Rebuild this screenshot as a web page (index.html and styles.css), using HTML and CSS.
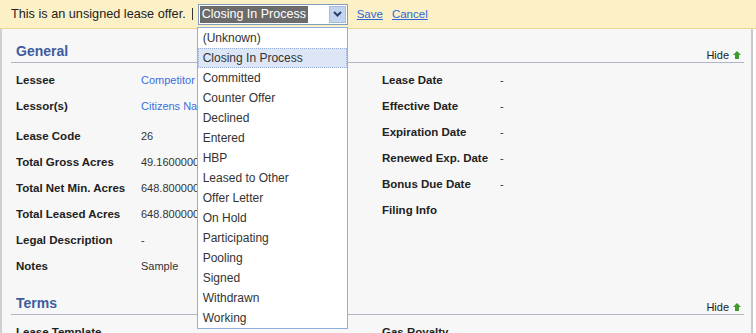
FILE: index.html
```html
<!DOCTYPE html>
<html lang="en">
<head>
  <meta charset="UTF-8" />
  <title>Lease Offer</title>
  <link rel="stylesheet" href="styles.css">
</head>
<body>
  <div class="notice">
    <span class="notice-text">This is an unsigned lease offer.</span>
    <span class="caret"></span>
    <div class="status-select">
      <div class="select-box">
        <span class="select-value">Closing In Process</span>
        <span class="select-btn">
          <svg width="9" height="6" viewBox="0 0 9 6"><path d="M1 1 L4.5 4.5 L8 1" fill="none" stroke="#2a3f6e" stroke-width="2"/></svg>
        </span>
      </div>
      <ul class="select-list">
        <li>(Unknown)</li>
        <li class="active">Closing In Process</li>
        <li>Committed</li>
        <li>Counter Offer</li>
        <li>Declined</li>
        <li>Entered</li>
        <li>HBP</li>
        <li>Leased to Other</li>
        <li>Offer Letter</li>
        <li>On Hold</li>
        <li>Participating</li>
        <li>Pooling</li>
        <li>Signed</li>
        <li>Withdrawn</li>
        <li>Working</li>
      </ul>
    </div>
    <a href="#" class="action">Save</a>
    <a href="#" class="action">Cancel</a>
  </div>

  <div class="page">
    <div class="section">
      <div class="section-head">
        <h2>General</h2>
        <a href="#" class="hide">Hide <span class="up"></span></a>
      </div>
      <div class="section-body">
        <div class="col">
          <div class="row"><span class="label">Lessee</span><a href="#" class="value link">Competitor Leasing Co.</a></div>
          <div class="row tall"><span class="label">Lessor(s)</span><a href="#" class="value link">Citizens National Bank</a></div>
          <div class="row"><span class="label">Lease Code</span><span class="value">26</span></div>
          <div class="row"><span class="label">Total Gross Acres</span><span class="value">49.16000000</span></div>
          <div class="row"><span class="label">Total Net Min. Acres</span><span class="value">648.80000000</span></div>
          <div class="row"><span class="label">Total Leased Acres</span><span class="value">648.80000000</span></div>
          <div class="row"><span class="label">Legal Description</span><span class="value">-</span></div>
          <div class="row"><span class="label">Notes</span><span class="value">Sample</span></div>
        </div>
        <div class="col right">
          <div class="row"><span class="label">Lease Date</span><span class="value">-</span></div>
          <div class="row"><span class="label">Effective Date</span><span class="value">-</span></div>
          <div class="row"><span class="label">Expiration Date</span><span class="value">-</span></div>
          <div class="row"><span class="label">Renewed Exp. Date</span><span class="value">-</span></div>
          <div class="row"><span class="label">Bonus Due Date</span><span class="value">-</span></div>
          <div class="row"><span class="label">Filing Info</span><span class="value"></span></div>
        </div>
      </div>
    </div>

    <div class="section">
      <div class="section-head">
        <h2>Terms</h2>
        <a href="#" class="hide">Hide <span class="up"></span></a>
      </div>
      <div class="section-body">
        <div class="col">
          <div class="row"><span class="label">Lease Template</span><span class="value"></span></div>
        </div>
        <div class="col right">
          <div class="row"><span class="label">Gas Royalty</span><span class="value"></span></div>
        </div>
      </div>
    </div>
  </div>
</body>
</html>
```

FILE: styles.css
```css
* {
  box-sizing: border-box;
}

body {
  margin: 0;
  background: #ffffff;
  font-family: "Liberation Sans", Arial, sans-serif;
  color: #222;
  overflow: hidden;
}

/* notice bar */
.notice {
  display: flex;
  align-items: center;
  height: 29px;
  padding: 0 11px;
  background: #fcf1c6;
  border-bottom: 1px solid #ead68e;
  font-size: 12.7px;
  position: relative;
  z-index: 2;
}

.notice-text {
  color: #222;
}

.caret {
  width: 1px;
  height: 12px;
  background: #333;
  margin: 0 5px 0 6px;
}

.status-select {
  position: relative;
  margin-right: 9px;
}

.select-box {
  display: flex;
  align-items: center;
  width: 150px;
  height: 21px;
  border: 1px solid #7f9db9;
  background: #fff;
  padding: 1px;
}

.select-value {
  background: #6b6b6b;
  color: #fff;
  padding: 0 2px 0 2px;
  line-height: 17px;
  font-size: 12.5px;
}

.select-btn {
  margin-left: auto;
  width: 17px;
  height: 17px;
  background: #c3d4ef;
  border: 1px solid #a7bcdf;
  display: flex;
  align-items: center;
  justify-content: center;
}

.select-list {
  position: absolute;
  left: -1px;
  top: 23px;
  width: 151px;
  margin: 0;
  padding: 0;
  list-style: none;
  background: #fff;
  border: 1px solid #8fb0e0;
  font-size: 12px;
  color: #333;
}

.select-list li {
  height: 20px;
  line-height: 20px;
  padding-left: 5px;
}

.select-list li.active {
  background: #dce6f6;
  outline: 1px dotted #9bb2d8;
  outline-offset: -1px;
}

.action {
  color: #2f63d6;
  font-size: 11.5px;
  margin-right: 9px;
}

/* page */
.page {
  background: #f7f7f7;
  border-left: 2px solid #cfcfcf;
  border-right: 2px solid #c9c9c9;
  margin-right: 3px;
  padding: 8px 7px 0 9px;
  height: 304px;
}

.section-head {
  display: flex;
  align-items: flex-end;
  justify-content: space-between;
  height: 26px;
  border-bottom: 1px solid #b3b3c6;
}

.section-head h2 {
  margin: 0;
  padding: 0 0 3px 5px;
  font-size: 14px;
  color: #3d5c9e;
}

.hide {
  color: #222;
  font-size: 11px;
  text-decoration: none;
  display: flex;
  align-items: center;
  gap: 4px;
  padding: 0 3px 1px 0;
}

.up {
  width: 8px;
  height: 8px;
  position: relative;
}

.up::before {
  content: "";
  position: absolute;
  left: 0;
  top: 0;
  border-left: 4px solid transparent;
  border-right: 4px solid transparent;
  border-bottom: 4px solid #3f9a2e;
}

.up::after {
  content: "";
  position: absolute;
  left: 2px;
  top: 4px;
  width: 4px;
  height: 4px;
  background: #3f9a2e;
}

.section-body {
  display: flex;
  padding: 4px 0 10px 5px;
}

.col {
  width: 366px;
}

.col.right {
  width: auto;
}

.row {
  display: flex;
  align-items: flex-start;
  height: 26px;
  line-height: 26px;
}

.row.tall {
  height: 30px;
}

.label {
  width: 125px;
  font-weight: bold;
  font-size: 11.5px;
  color: #222;
}

.right .label {
  width: 118px;
}

.value {
  font-size: 11px;
  color: #333;
  white-space: nowrap;
}

.value.link {
  color: #3b6fdc;
  text-decoration: none;
}
```
